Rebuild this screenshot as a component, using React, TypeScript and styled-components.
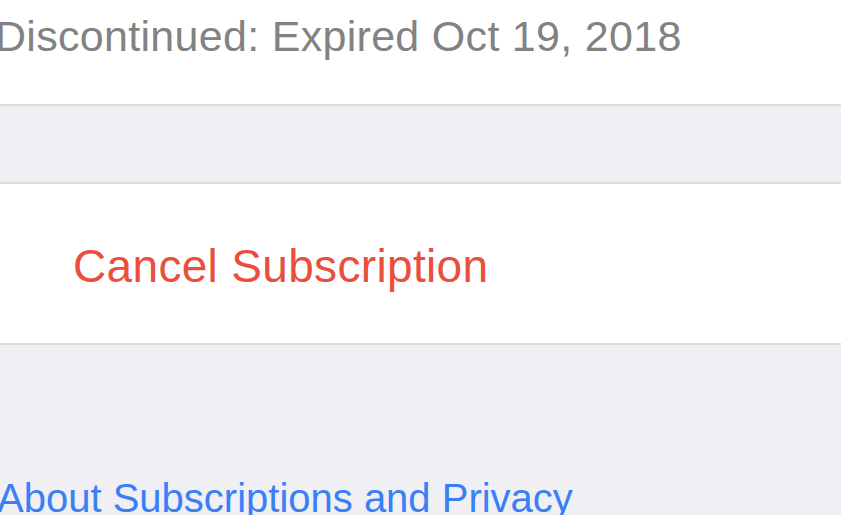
import React from "react";
import styled, { createGlobalStyle } from "styled-components";

const Global = createGlobalStyle`
  html, body { margin: 0; padding: 0; background: #efeff4; overflow: hidden; }
  body { font-family: "Liberation Sans", Arial, sans-serif; -webkit-font-smoothing: antialiased; }
`;

const Page = styled.div`
  width: 841px;
  height: 515px;
  display: flex;
  flex-direction: column;
  background: #efeff4;
  overflow: hidden;
`;

const StatusCell = styled.div`
  background: #ffffff;
  height: 106px;
  box-sizing: border-box;
  padding-top: 15px;
  border-bottom: 2px solid #dcdcdf;
  flex: none;
`;

const StatusText = styled.div`
  font-size: 43px;
  line-height: 1;
  letter-spacing: 0.3px;
  color: #828282;
  margin-left: -5px;
  white-space: nowrap;
`;

const Gap = styled.div<{ $h: number }>`
  height: ${(p) => p.$h}px;
  flex: none;
`;

const ActionCell = styled.div`
  background: #ffffff;
  border-top: 2px solid #dcdcdf;
  border-bottom: 2px solid #dcdcdf;
  height: 163px;
  box-sizing: border-box;
  padding: 59px 0 0 73px;
  flex: none;
`;

const DangerText = styled.div`
  font-size: 46px;
  line-height: 1;
  letter-spacing: 0.33px;
  color: #ea4e3d;
  white-space: nowrap;
`;

const Footer = styled.div`
  padding: 133px 0 0 0;
  flex: none;
`;

const LinkText = styled.a`
  display: block;
  font-size: 40px;
  line-height: 1;
  color: #3a7ff6;
  text-decoration: none;
  margin-left: -3px;
  white-space: nowrap;
`;

export default function App() {
  return (
    <>
      <Global />
      <Page>
        <StatusCell>
          <StatusText>Discontinued: Expired Oct 19, 2018</StatusText>
        </StatusCell>
        <Gap $h={76} />
        <ActionCell>
          <DangerText>Cancel Subscription</DangerText>
        </ActionCell>
        <Footer>
          <LinkText href="#">About Subscriptions and Privacy</LinkText>
        </Footer>
      </Page>
    </>
  );
}
